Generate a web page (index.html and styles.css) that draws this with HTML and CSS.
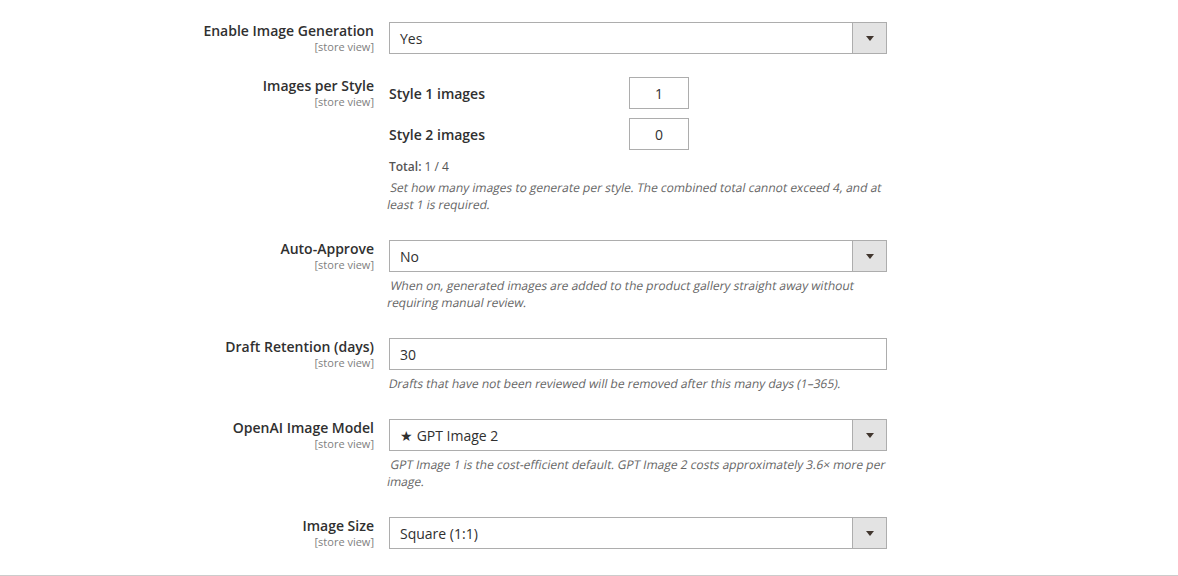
FILE: index.html
```html
<!DOCTYPE html>
<html lang="en">
<head>
  <meta charset="UTF-8" />
  <title>Image Generation Settings</title>
  <link rel="stylesheet" href="styles.css">
</head>
<body>

<div class="config">

  <div class="row">
    <div class="label">
      <span class="title">Enable Image Generation</span>
      <span class="scope">[store view]</span>
    </div>
    <div class="value">
      <div class="select"><span class="select-text">Yes</span><span class="arrow"></span></div>
    </div>
  </div>

  <div class="row">
    <div class="label">
      <span class="title">Images per Style</span>
      <span class="scope">[store view]</span>
    </div>
    <div class="value">
      <div class="style-row">
        <span class="style-label">Style 1 images</span>
        <div class="small-input">1</div>
      </div>
      <div class="style-row">
        <span class="style-label">Style 2 images</span>
        <div class="small-input">0</div>
      </div>
      <div class="total"><b>Total:</b> 1 / 4</div>
      <div class="note">Set how many images to generate per style. The combined total cannot exceed 4, and at least 1 is required.</div>
    </div>
  </div>

  <div class="row">
    <div class="label">
      <span class="title">Auto-Approve</span>
      <span class="scope">[store view]</span>
    </div>
    <div class="value">
      <div class="select"><span class="select-text">No</span><span class="arrow"></span></div>
      <div class="note">When on, generated images are added to the product gallery straight away without requiring manual review.</div>
    </div>
  </div>

  <div class="row">
    <div class="label">
      <span class="title">Draft Retention (days)</span>
      <span class="scope">[store view]</span>
    </div>
    <div class="value">
      <div class="text-input">30</div>
      <div class="note">Drafts that have not been reviewed will be removed after this many days (1–365).</div>
    </div>
  </div>

  <div class="row">
    <div class="label">
      <span class="title">OpenAI Image Model</span>
      <span class="scope">[store view]</span>
    </div>
    <div class="value">
      <div class="select"><span class="select-text">★ GPT Image 2</span><span class="arrow"></span></div>
      <div class="note">GPT Image 1 is the cost-efficient default. GPT Image 2 costs approximately 3.6× more per image.</div>
    </div>
  </div>

  <div class="row">
    <div class="label">
      <span class="title">Image Size</span>
      <span class="scope">[store view]</span>
    </div>
    <div class="value">
      <div class="select"><span class="select-text">Square (1:1)</span><span class="arrow"></span></div>
    </div>
  </div>

</div>

</body>
</html>
```

FILE: styles.css
```css
body {
  margin: 0;
  font-family: 'Open Sans', sans-serif;
  background: #fff;
  color: #303030;
}

.config {
  padding-top: 22px;
  padding-bottom: 26px;
  border-bottom: 1px solid #cccccc;
}

.row {
  display: grid;
  grid-template-columns: 374px 498px;
  column-gap: 15px;
  margin-bottom: 23px;
}

.row:last-child {
  margin-bottom: 0;
}

.label {
  text-align: right;
  display: flex;
  flex-direction: column;
}

.title {
  font-size: 14px;
  font-weight: 600;
  line-height: 18px;
  color: #303030;
}

.scope {
  font-size: 11px;
  line-height: 13px;
  color: #808080;
}

.select,
.text-input {
  height: 32px;
  box-sizing: border-box;
  border: 1px solid #adadad;
  display: flex;
  align-items: center;
  font-size: 14px;
  color: #303030;
  background: #fff;
}

.select-text,
.text-input {
  padding-left: 10px;
}

.select-text {
  flex: 1;
}

.arrow {
  width: 33px;
  height: 30px;
  background: #e3e3e3;
  border-left: 1px solid #adadad;
  position: relative;
}

.arrow::after {
  content: "";
  position: absolute;
  left: 13px;
  top: 13px;
  border-left: 4px solid transparent;
  border-right: 4px solid transparent;
  border-top: 5px solid #41362f;
}

.style-row {
  display: flex;
  align-items: center;
  margin-bottom: 9px;
}

.style-row + .style-row {
  margin-bottom: 0;
}

.style-label {
  width: 240px;
  font-size: 14px;
  font-weight: 600;
}

.small-input {
  width: 60px;
  height: 32px;
  box-sizing: border-box;
  border: 1px solid #adadad;
  display: flex;
  align-items: center;
  justify-content: center;
  font-size: 14px;
}

.total {
  margin-top: 8px;
  font-size: 12px;
  line-height: 17px;
  color: #555;
}

.total b {
  font-weight: 600;
}

/* regular face slanted, like the original's faux italic */
.note {
  margin-top: 5px;
  margin-bottom: 4px;
  font-size: 12px;
  line-height: 17px;
  color: #666;
  transform: skewX(-11deg);
}

.total + .note {
  margin-top: 4px;
}
```
